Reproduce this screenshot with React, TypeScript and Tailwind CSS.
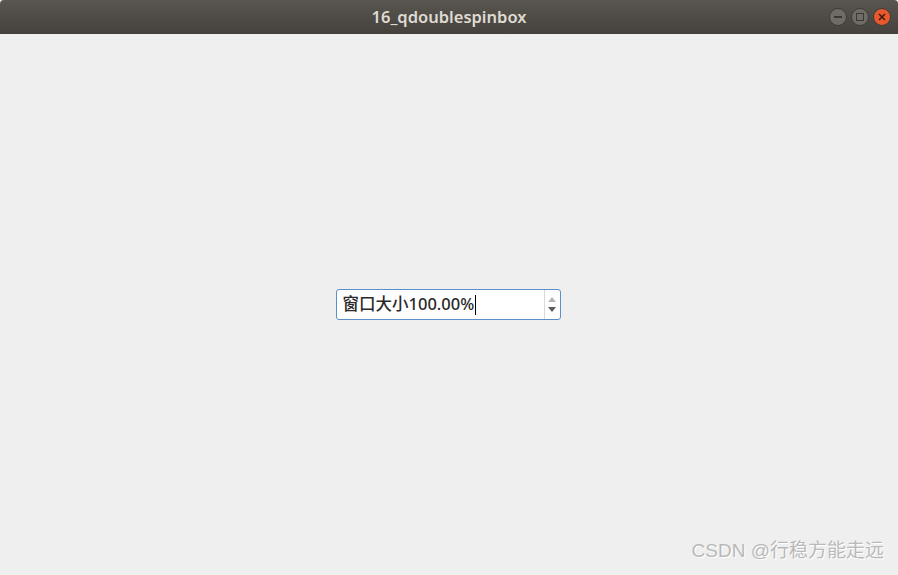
const CircleButton = ({ kind }: { kind: "min" | "max" | "close" }) => {
  const bg = kind === "close" ? "bg-[#e9592c]" : "bg-[#6f6c66]";
  return (
    <div className={`w-[18px] h-[18px] rounded-full ${bg} flex items-center justify-center border border-[#3d3b37]`}>
      {kind === "min" && <div className="w-[8px] h-[2px] bg-[#3a3834]" />}
      {kind === "max" && <div className="w-[8px] h-[8px] border-[1.5px] border-[#3a3834]" />}
      {kind === "close" && (
        <svg width="8" height="8" viewBox="0 0 8 8">
          <path d="M1 1L7 7M7 1L1 7" stroke="#3a1a10" strokeWidth="1.5" />
        </svg>
      )}
    </div>
  );
};

const App = () => {
  return (
    <div className="w-[898px] h-[575px] flex flex-col bg-[#efefef] overflow-hidden">
      <div className="h-[34px] shrink-0 bg-gradient-to-b from-[#595650] to-[#45423d] rounded-t-[4px] flex items-center relative">
        <div className="flex-1 text-center text-[16.5px] font-semibold text-[#dfdbd2] font-['Noto_Sans',sans-serif]">
          16_qdoublespinbox
        </div>
        <div className="absolute right-[7px] top-[8px] flex gap-[4px]">
          <CircleButton kind="min" />
          <CircleButton kind="max" />
          <CircleButton kind="close" />
        </div>
      </div>
      <div className="flex-1 flex flex-col">
        <div className="flex-1 flex items-start justify-center pt-[255px] pr-[2px]">
          <div className="w-[225px] h-[31px] bg-white border border-[#5b8fc7] rounded-[3px] flex">
            <div className="flex-1 flex items-center pl-[6px] text-[16.5px] font-medium text-[#2a2a2a] font-['Noto_Sans','Noto_Sans_CJK_SC',sans-serif]">
              <span>窗口大小100.00%</span>
              <span className="w-[1px] h-[20px] bg-black ml-[1px]" />
            </div>
            <div className="w-[16px] border-l border-[#d8d8d8] flex flex-col items-center justify-center gap-[5px]">
              <svg width="8" height="5" viewBox="0 0 8 5">
                <path d="M0 5L4 0L8 5Z" fill="#b5b5b5" />
              </svg>
              <svg width="8" height="5" viewBox="0 0 8 5">
                <path d="M0 0L4 5L8 0Z" fill="#5c5c5c" />
              </svg>
            </div>
          </div>
        </div>
        <div className="h-[40px] flex justify-end items-start pr-[14px] pt-[2px]">
          <span className="text-[19px] text-[#b9b9b9] font-['Liberation_Sans','Noto_Sans_CJK_SC',sans-serif] [text-shadow:1px_1px_0_#ffffff]">
            CSDN @行稳方能走远
          </span>
        </div>
      </div>
    </div>
  );
};

export default App;
